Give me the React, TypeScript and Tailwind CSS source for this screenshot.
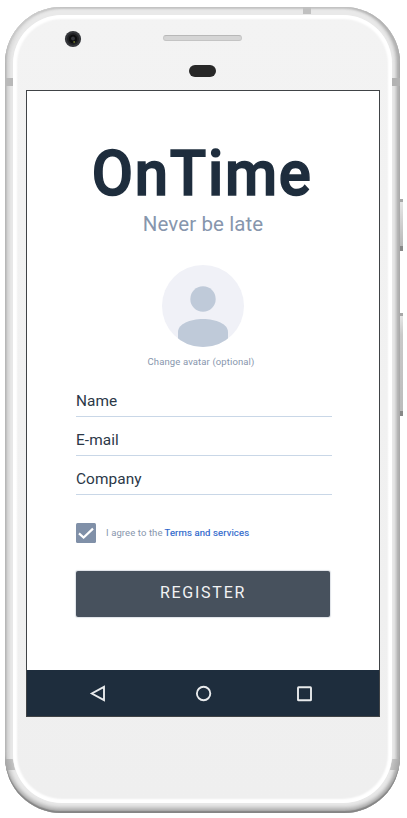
import React from "react";

const fields = ["Name", "E-mail", "Company"];

function PhoneTop() {
  return (
    <div className="relative h-[74px] shrink-0">
      <svg className="absolute left-[38px] top-[14px]" width="18" height="18" viewBox="0 0 18 18">
        <circle cx="9" cy="9" r="8.1" fill="#35373b" />
        <circle cx="9" cy="9" r="6" fill="#202124" />
        <circle cx="9" cy="9" r="4.2" fill="#0c0d0e" />
        <circle cx="9" cy="8.5" r="1.9" fill="#34363c" />
        <circle cx="10.2" cy="12" r="1" fill="#68702c" />
      </svg>
      <div className="absolute left-[137px] top-[19px] h-[6px] w-[79px] rounded-full border border-t-[#b8b8b8] border-x-[#c8c8c8] border-b-[#c4c4c4] bg-[#d5d5d5]" />
      <div className="absolute left-[163px] top-[49px] h-[12px] w-[27px] rounded-full bg-[#282828]" />
    </div>
  );
}

function NavBar() {
  return (
    <div className="flex h-[46px] shrink-0 items-center bg-[#1e2d3d]">
      <svg width="352" height="46" viewBox="0 0 352 46" fill="none" stroke="#e8eaec" strokeWidth="1.9">
        <path d="M77 16.8 L64.8 23.5 L77 30.2 Z" />
        <circle cx="176.6" cy="23.5" r="6.7" />
        <rect x="271" y="17.3" width="13" height="13" rx="0.6" />
      </svg>
    </div>
  );
}

export default function App() {
  return (
    <div className="relative h-[818px] w-[407px] overflow-hidden bg-white pl-[5px] pt-[7px] font-[Roboto,sans-serif]">
      <div className="absolute left-[399px] top-[199px] h-[52px] w-[4px] border-b-[5px] border-t-[3px] border-b-[#888888] border-t-[#a8a8a8] bg-linear-to-b from-[#e6e6e6] to-[#b8b8b8]" />
      <div className="absolute left-[399px] top-[313px] h-[103px] w-[4px] border-b-[5px] border-t-[3px] border-b-[#888888] border-t-[#a8a8a8] bg-linear-to-b from-[#e6e6e6] via-[#c9c9c9] via-20% to-[#bcbcbc]" />

      <div className="relative h-[806px] w-[395px] overflow-hidden rounded-[56px] bg-[#e9e9e9] p-[8px] pb-[10px] shadow-[inset_0_-2px_1px_#858585,inset_0_-5px_4px_#a9a9a9,inset_2px_0_1px_#cccccc,inset_-3px_0_2px_#b4b4b4,inset_0_2px_2px_#c8c8c8,inset_5px_0_3px_#dadada,inset_-5px_0_3px_#cecece]">
        <div className="absolute left-[298px] top-0 h-[7px] w-[8px] bg-[#c0c0c0]" />
        <div className="absolute left-0 top-[71px] h-[8px] w-[8px] bg-[#b9b9b9]" />
        <div className="absolute right-0 top-[71px] h-[8px] w-[8px] bg-[#b3b3b3]" />
        <div className="absolute left-0 top-[752px] h-[11px] w-[9px] skew-x-12 bg-linear-to-r from-[#a4a4a4] to-[#c6c6c6]" />
        <div className="absolute right-0 top-[752px] h-[11px] w-[9px] -skew-x-12 bg-linear-to-l from-[#a4a4a4] to-[#c6c6c6]" />

        <div className="relative flex h-[788px] w-[379px] flex-col rounded-[49px] bg-linear-to-b from-[#f3f3f3] to-[#efefef] px-[13px] pt-px shadow-[inset_0_0_2px_4px_#ffffff]">
          <PhoneTop />

          <main className="flex h-[627px] w-[354px] shrink-0 flex-col border border-[#404346] bg-white">
            <div className="flex h-[579px] flex-col items-center">
              <h1 className="mt-[48px] h-[70px] -translate-x-[1px] scale-x-95 text-[63px] font-medium leading-[70px] tracking-[1.8px] text-[#1e2d3d] [-webkit-text-stroke:1.5px_#1e2d3d]">OnTime</h1>
              <p className="h-[30px] text-[20.5px] leading-[30px] tracking-[0.1px] text-[#8796ad]">Never be late</p>

              <svg className="mt-[26px] shrink-0" width="82" height="82" viewBox="0 0 82 82">
                <defs>
                  <clipPath id="avatar">
                    <circle cx="41" cy="41" r="41" />
                  </clipPath>
                </defs>
                <circle cx="41" cy="41" r="41" fill="#f0f1f7" />
                <g clipPath="url(#avatar)" fill="#bfcad9">
                  <circle cx="41" cy="34" r="12.7" />
                  <path d="M16 82 V67 C16 59 28 54 41 54 C54 54 66 59 66 67 V82 Z" />
                </g>
              </svg>
              <p className="mt-[5px] h-[20px] -translate-x-[2px] text-[9.5px] leading-[20px] tracking-[0.12px] text-[#8796ad]">Change avatar (optional)</p>

              <form className="flex w-[256px] translate-x-px flex-col text-[#2b3847]">
                <div className="mt-[6px]">
                  {fields.map((label) => (
                    <label key={label} className="flex h-[39px] items-end border-b border-[#c9d7e7] pb-[5px]">
                      <span className="text-[15.4px] leading-[20px] tracking-[0.08px]">{label}</span>
                    </label>
                  ))}
                </div>
                <div className="mt-[28px] flex h-[20px] items-center">
                  <svg width="20" height="20" viewBox="0 0 20 20">
                    <rect width="20" height="20" rx="1.5" fill="#8090a8" />
                    <path d="M3 10.4 L7.6 14.6 L17 5.6" fill="none" stroke="#ffffff" strokeWidth="2.2" />
                  </svg>
                  <span className="ml-[10px] whitespace-nowrap text-[9.5px] tracking-[0.1px] text-[#8796ad]">I agree to the</span>
                  <span className="ml-[2px] whitespace-nowrap text-[9.5px] tracking-[0.13px] text-[#2b66cc] [-webkit-text-stroke:0.15px_#2b66cc]">Terms and services</span>
                </div>
                <button type="button" className="mt-[28px] h-[46px] w-[254px] rounded-[2px] bg-[#47515d] pb-[2px] text-[16px] tracking-[1.75px] text-[#f2f3f4] shadow-[0_0_1px_1px_#dfe3e8]">REGISTER</button>
              </form>
            </div>
            <NavBar />
          </main>
        </div>
      </div>
    </div>
  );
}
